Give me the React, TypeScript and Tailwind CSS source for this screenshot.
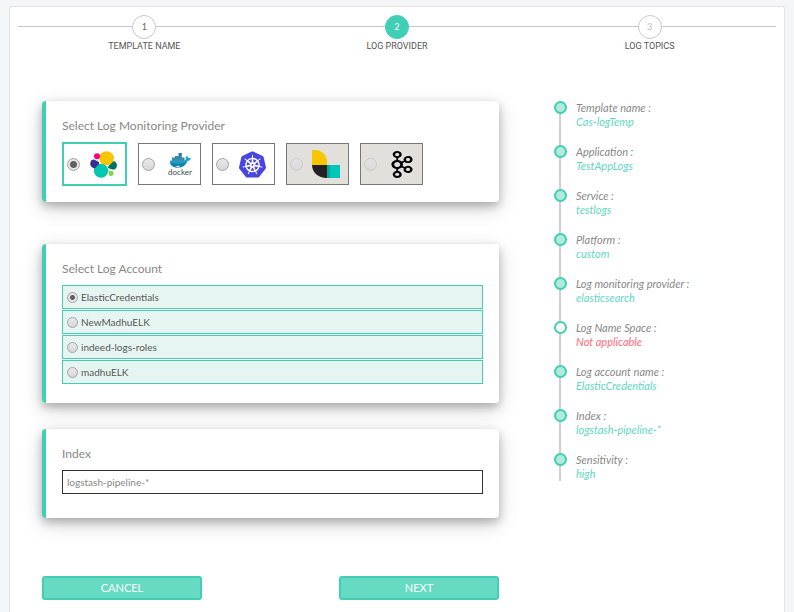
import { useState } from "react";
import type { ReactNode } from "react";
import { SiKubernetes, SiApachekafka } from "react-icons/si";

const steps = [
  { label: "TEMPLATE NAME", tone: "border-[#c8c8c8] bg-white text-[#666]" },
  { label: "LOG PROVIDER", tone: "border-[#3fcfb4] bg-[#3fcfb4] text-white" },
  { label: "LOG TOPICS", tone: "border-[#c8c8c8] bg-white text-[#bbb]" },
];

const summary = [
  { label: "Template name", value: "Cas-logTemp" },
  { label: "Application", value: "TestAppLogs" },
  { label: "Service", value: "testlogs" },
  { label: "Platform", value: "custom" },
  { label: "Log monitoring provider", value: "elasticsearch" },
  { label: "Log Name Space", value: "Not applicable", missing: true },
  { label: "Log account name", value: "ElasticCredentials" },
  { label: "Index", value: "logstash-pipeline-*" },
  { label: "Sensitivity", value: "high" },
];

const accounts = ["ElasticCredentials", "NewMadhuELK", "indeed-logs-roles", "madhuELK"];

function ElasticLogo() {
  return (
    <svg viewBox="0 0 27 27" className="size-[27px]" aria-hidden="true">
      <ellipse cx="16.5" cy="7.2" rx="7.4" ry="7" fill="#f8c500" />
      <ellipse cx="11" cy="19.800" rx="7.200" ry="7" fill="#00c7b2" />
      <circle cx="7" cy="5.300" r="3" fill="#f5008b" />
      <path d="M.3 12C.8 9 2.500 8.300 4.500 8.700l4.500 2.200.2 1.800-4.500 4.700C1.500 16.700-.2 14.700.3 12z" fill="#353092" />
      <path d="M23.800 10c2.500 1 3.500 3 3 5.500-.5 2.300-2.300 3.500-4.500 3l-4.300-1.500.5-2z" fill="#00725e" />
      <path d="M18.500 19.300l3.700.9c1.700.5 1.800 2.300 1 3.600-1 1.700-3.200 1.700-4.400.3z" fill="#84d742" />
    </svg>
  );
}

function DockerLogo() {
  return (
    <span className="flex w-6 flex-col items-center">
      <svg viewBox="0 0 22 15" className="h-[15px] w-[22px]" aria-hidden="true">
        <path d="M1 7.500h15c1-1 1.200-2.200.8-3.500L18 2.800l1.500 2.100 2.500.3c-.3 1.700-1.900 2.600-3.500 2.700-1.500 4.100-5 6.700-9.500 6.700-4.500 0-8-2.100-8-7.100z" fill="#1f9fca" />
        <path d="M1 9.500c5 1.500 10 1.300 16.500-.2-2 3.500-5 5.300-8.500 5.300C4.800 14.600 1.500 12.700 1 9.500z" fill="#1483a9" />
        <path d="M3 4.500h3v3.300H3zM6 3h3.500v4.800H6zM9.500 0h3.300v7.800H9.500zM12.800 4.500h2.700v3.300h-2.700z" fill="#267f9c" />
        <path d="M3 6h12.500M6 4h6.500" stroke="#62b6cf" strokeWidth=".5" />
        <path d="M6 14l3.500-1.500 2 1.800z" fill="#d9edf2" />
      </svg>
      <span className="text-[8px] leading-[8px] text-[#394d54]">docker</span>
    </span>
  );
}

function LogstashLogo() {
  return (
    <svg viewBox="0 0 28 28" className="size-7" aria-hidden="true">
      <path d="M0 0h3c7 0 12 5 12 12v3H0z" fill="#f8c500" />
      <path d="M0 15h15v13C6 28 0 22 0 15z" fill="#272023" />
      <path d="M15 15h3v13h-3z" fill="#00a99d" />
      <path d="M18 15h10v13H18z" fill="#00c7b8" />
    </svg>
  );
}

const providers: { id: string; logo: ReactNode; disabled?: boolean }[] = [
  { id: "Elasticsearch", logo: <ElasticLogo /> },
  { id: "Docker", logo: <DockerLogo /> },
  { id: "Kubernetes", logo: <SiKubernetes className="size-[27px] text-[#4845e5]" /> },
  { id: "Logstash", logo: <LogstashLogo />, disabled: true },
  {
    id: "Kafka",
    logo: (
      <SiApachekafka
        viewBox="3.700 0 16.600 24"
        preserveAspectRatio="none"
        className="h-[27px] w-6 text-black"
      />
    ),
    disabled: true,
  },
];

const radio =
  "m-0 shrink-0 appearance-none rounded-full border border-[#a3a3a3] bg-linear-to-b from-[#e9e9e9] to-[#d6d6d6] disabled:border-[#c9c9c9] disabled:from-[#e2e2e2] disabled:to-[#dadada]";

const providerRadio =
  "size-[13px] checked:bg-[radial-gradient(circle,#606060_3px,#e6e6e6_4px)]";

const accountRadio =
  "size-[11px] checked:bg-[radial-gradient(circle,#606060_2px,#e6e6e6_3px)]";

const card =
  "rounded border-l-4 border-[#3fcfb4] bg-white px-4 shadow-[0_4px_8px_0_rgba(0,0,0,0.22),0_6px_20px_0_rgba(0,0,0,0.19)]";

const heading = "text-xs leading-4 text-[#888]";

const action =
  "h-6 w-40 rounded-[3px] border-2 border-[#3fcfb4] bg-[#66dac3] text-[11px] leading-5 text-white";

export default function App() {
  const [provider, setProvider] = useState("Elasticsearch");
  const [account, setAccount] = useState(accounts[0]);
  const [index, setIndex] = useState("logstash-pipeline-*");

  return (
    <div className="flex min-h-screen flex-col bg-[#f4f5f7] px-[9px] pt-1.5 font-[Lato,sans-serif]">
      <main className="flex-1 rounded-t-[3px] border border-b-0 border-[#e3e3e3] bg-white">
        <ol className="mx-2 grid grid-cols-3 bg-[linear-gradient(#c8c8c8,#c8c8c8)] bg-[length:100%_1px] bg-[position:0_19px] bg-no-repeat pt-2">
          {steps.map((step, i) => (
            <li key={step.label} className="flex flex-col items-center">
              <span className={`flex size-6 items-center justify-center rounded-full border text-[9px] ${step.tone}`}>
                {i + 1}
              </span>
              <span className="font-[Roboto,sans-serif] text-[9px] leading-[14px] text-[#555]">{step.label}</span>
            </li>
          ))}
        </ol>

        <div className="flex gap-[55px] pt-12 pl-8">
          <form className="min-w-0 flex-1" onSubmit={(e) => e.preventDefault()}>
            <fieldset className={`${card} pt-[17px] pb-4`}>
              <legend className={`float-left w-full ${heading}`}>Select Log Monitoring Provider</legend>
              <div className="clear-both flex items-center gap-[11px] pt-2">
                {providers.map((p) => (
                  <label
                    key={p.id}
                    className={`flex items-center justify-between ${
                      provider === p.id
                        ? "h-11 w-[65px] border-2 border-[#3fcfb4] pr-2 pl-[3px]"
                        : "h-[42px] w-[63px] border border-[#777] pr-2 pl-[3px]"
                    } ${p.disabled ? "bg-[#e2e0db]" : "bg-white"}`}
                  >
                    <input
                      type="radio"
                      name="provider"
                      aria-label={p.id}
                      className={`${radio} ${providerRadio}`}
                      checked={provider === p.id}
                      disabled={p.disabled}
                      onChange={() => setProvider(p.id)}
                    />
                    {p.logo}
                  </label>
                ))}
              </div>
            </fieldset>

            <fieldset className={`${card} mt-[42px] pt-[17px] pb-[19px]`}>
              <legend className={`float-left w-full ${heading}`}>Select Log Account</legend>
              <div className="clear-both flex flex-col gap-px pt-2">
                {accounts.map((name) => (
                  <label
                    key={name}
                    className="flex h-6 items-center gap-[3px] border border-[#3fcfb4] bg-[#e7f5f2] pl-1 text-[10px] text-[#555]"
                  >
                    <input
                      type="radio"
                      name="account"
                      className={`${radio} ${accountRadio}`}
                      checked={account === name}
                      onChange={() => setAccount(name)}
                    />
                    {name}
                  </label>
                ))}
              </div>
            </fieldset>

            <div className={`${card} mt-[26px] pt-[17px] pb-6`}>
              <label htmlFor="index" className={`block ${heading}`}>
                Index
              </label>
              <input
                id="index"
                className="mt-2 block h-6 w-full border border-[#333] px-1 text-[10px] text-[#888] outline-none"
                value={index}
                onChange={(e) => setIndex(e.target.value)}
              />
            </div>

            <div className="mt-[58px] flex justify-between">
              <button type="button" className={action}>CANCEL</button>
              <button type="submit" className={action}>NEXT</button>
            </div>
          </form>

          <dl className="h-[380px] w-[230px] bg-[linear-gradient(#d0cece,#d0cece)] bg-[length:2px_100%] bg-[position:5px_0] bg-no-repeat text-[11px] leading-[14px] italic">
            {summary.map((item) => (
              <div key={item.label} className="grid h-11 grid-cols-[13px_1fr] content-start gap-x-[9px]">
                <dt className="col-span-2 grid grid-cols-subgrid text-[#888]">
                  <span
                    className={`size-[13px] rounded-full border-2 border-[#3fcfb4] ${
                      item.missing ? "bg-white" : "bg-[#b2eadd]"
                    }`}
                  />
                  {item.label} :
                </dt>
                <dd className={`col-start-2 ${item.missing ? "text-[#ff6b7a]" : "text-[#5fd8c1]"}`}>{item.value}</dd>
              </div>
            ))}
          </dl>
        </div>
      </main>
    </div>
  );
}
